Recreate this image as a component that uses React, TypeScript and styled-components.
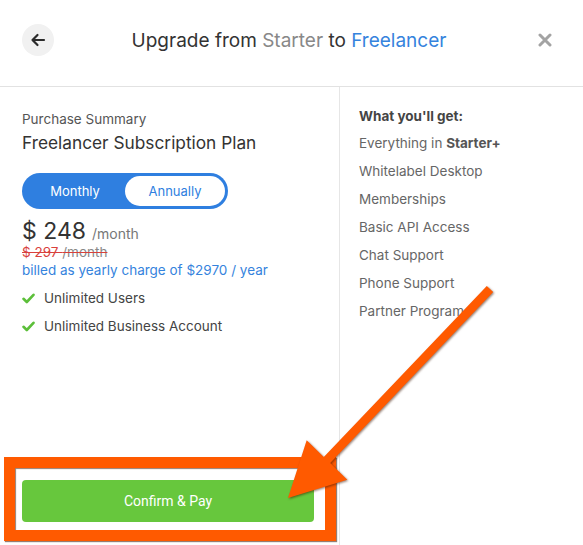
import React from "react";
import styled, { createGlobalStyle } from "styled-components";

const Global = createGlobalStyle`
  html, body { margin: 0; padding: 0; background: #fff; }
  body { font-family: Inter, "Noto Sans", sans-serif; -webkit-font-smoothing: antialiased; }
  * { box-sizing: border-box; }
`;

const Modal = styled.div`
  position: relative;
  width: 583px;
  height: 545px;
  overflow: hidden;
  display: flex;
  flex-direction: column;
  background: #fff;
`;

const Header = styled.header`
  height: 87px;
  flex-shrink: 0;
  border-bottom: 1px solid #e2e2e2;
  display: grid;
  grid-template-columns: 1fr auto 1fr;
  align-items: center;
  padding: 0 31px 6px 22px;
`;

const BackButton = styled.button`
  justify-self: start;
  width: 32px;
  height: 32px;
  border-radius: 50%;
  border: none;
  background: #f1f1f1;
  display: flex;
  align-items: center;
  justify-content: center;
  padding: 0;
  color: #2b2b2b;
`;

const Title = styled.h1`
  margin: 0 0 0 4px;
  font-size: 19px;
  font-weight: 400;
  color: #333;
`;

const Muted = styled.span`
  color: #888;
`;

const Accent = styled.span`
  color: #3583dd;
`;

const CloseButton = styled.button`
  justify-self: end;
  border: none;
  background: none;
  padding: 0;
  color: #a3a3a3;
  display: flex;
`;

const Body = styled.div`
  flex: 1;
  display: flex;
`;

const Summary = styled.section`
  width: 340px;
  border-right: 1px solid #e6e6e6;
  padding: 22px 0 23px 22px;
  display: flex;
  flex-direction: column;
  font-size: 13.5px;
`;

const Eyebrow = styled.div`
  line-height: 20px;
  color: #555;
`;

const PlanName = styled.div`
  margin-top: 2px;
  font-size: 17.3px;
  line-height: 24px;
  color: #333;
`;

const Toggle = styled.div`
  margin-top: 18px;
  width: 206px;
  height: 36px;
  border-radius: 18px;
  background: #2f7fe0;
  padding: 3px;
  display: grid;
  grid-template-columns: 100px 1fr;
`;

const ToggleOption = styled.div<{ $active?: boolean }>`
  border-radius: 15px;
  display: flex;
  align-items: center;
  justify-content: center;
  font-size: 13px;
  color: ${(p) => (p.$active ? "#2f7fe0" : "#fff")};
  background: ${(p) => (p.$active ? "#fff" : "transparent")};
`;

const PriceRow = styled.div`
  margin-top: 9px;
  display: flex;
  align-items: baseline;
  gap: 6px;
  height: 26px;
  line-height: 26px;
`;

const Price = styled.span`
  font-size: 23px;
  color: #333;
`;

const Per = styled.span`
  font-size: 14px;
  color: #777;
`;

const OldPrice = styled.div`
  line-height: 16px;
  color: #d9413c;
  text-decoration: line-through;
`;

const OldPer = styled.span`
  color: #888;
`;

const Billed = styled.div`
  line-height: 20px;
  color: #3583dd;
`;

const Features = styled.ul`
  list-style: none;
  margin: 4px 0 0;
  padding: 0;
  display: flex;
  flex-direction: column;
`;

const Feature = styled.li`
  display: flex;
  align-items: center;
  gap: 9px;
  height: 28px;
  color: #444;
`;

const ButtonSlot = styled.div`
  position: relative;
  margin-top: auto;
  width: 292px;
`;

const PayButton = styled.button`
  width: 100%;
  height: 42px;
  border: none;
  border-radius: 4px;
  background: #67c73d;
  color: #fff;
  font-family: Roboto, "Liberation Sans", sans-serif;
  font-size: 14px;
`;

const Highlight = styled.div`
  position: absolute;
  left: -18px;
  right: -22px;
  top: -23px;
  bottom: -19px;
  border: 11px solid #ff5a00;
  box-shadow: 1px 1px 1px rgba(60, 20, 0, 0.55), inset 1px 1px 1px rgba(60, 20, 0, 0.55);
  pointer-events: none;
`;

const Perks = styled.section`
  flex: 1;
  padding: 16px 0 0 19px;
  font-size: 13.5px;
`;

const PerksTitle = styled.div`
  font-weight: 700;
  line-height: 26px;
  color: #444;
`;

const Perk = styled.div`
  line-height: 28px;
  color: #666;
`;

const Strong = styled.b`
  color: #555;
`;

const ArrowOverlay = styled.svg`
  position: absolute;
  left: 0;
  top: 0;
  width: 583px;
  height: 545px;
  pointer-events: none;
  filter: drop-shadow(1px 1px 1px rgba(60, 20, 0, 0.55));
`;

const Check = () => (
  <svg width="13" height="11" viewBox="0 0 13 11">
    <path d="M1.5 5.8 L4.8 9 L11.5 1.8" fill="none" stroke="#5cbf3a" strokeWidth="2.6" strokeLinecap="round" strokeLinejoin="round" />
  </svg>
);

const perks = [
  "Whitelabel Desktop",
  "Memberships",
  "Basic API Access",
  "Chat Support",
  "Phone Support",
  "Partner Program",
];

export default function App() {
  return (
    <>
      <Global />
      <Modal>
        <Header>
          <BackButton aria-label="Back">
            <svg width="16" height="16" viewBox="0 0 16 16">
              <path d="M14 8 H2.5 M7.5 3 L2.5 8 L7.5 13" fill="none" stroke="currentColor" strokeWidth="2.2" strokeLinecap="round" strokeLinejoin="round" />
            </svg>
          </BackButton>
          <Title>
            Upgrade from <Muted>Starter</Muted> to <Accent>Freelancer</Accent>
          </Title>
          <CloseButton aria-label="Close">
            <svg width="14" height="14" viewBox="0 0 14 14">
              <path d="M2 2 L12 12 M12 2 L2 12" stroke="currentColor" strokeWidth="3" strokeLinecap="round" />
            </svg>
          </CloseButton>
        </Header>
        <Body>
          <Summary>
            <Eyebrow>Purchase Summary</Eyebrow>
            <PlanName>Freelancer Subscription Plan</PlanName>
            <Toggle>
              <ToggleOption>Monthly</ToggleOption>
              <ToggleOption $active>Annually</ToggleOption>
            </Toggle>
            <PriceRow>
              <Price>$ 248</Price>
              <Per>/month</Per>
            </PriceRow>
            <OldPrice>
              $ 297 <OldPer>/month</OldPer>
            </OldPrice>
            <Billed>billed as yearly charge of $2970 / year</Billed>
            <Features>
              <Feature>
                <Check />
                Unlimited Users
              </Feature>
              <Feature>
                <Check />
                Unlimited Business Account
              </Feature>
            </Features>
            <ButtonSlot>
              <PayButton>Confirm &amp; Pay</PayButton>
              <Highlight />
            </ButtonSlot>
          </Summary>
          <Perks>
            <PerksTitle>What you'll get:</PerksTitle>
            <Perk>
              Everything in <Strong>Starter+</Strong>
            </Perk>
            {perks.map((p) => (
              <Perk key={p}>{p}</Perk>
            ))}
          </Perks>
        </Body>
        <ArrowOverlay viewBox="0 0 583 545">
          <polygon
            points="288,498 347.3,479.7 330.2,463.1 493.2,292.1 486.8,285.9 323.8,456.9 306.7,440.3"
            fill="#ff5a00"
          />
        </ArrowOverlay>
      </Modal>
    </>
  );
}
